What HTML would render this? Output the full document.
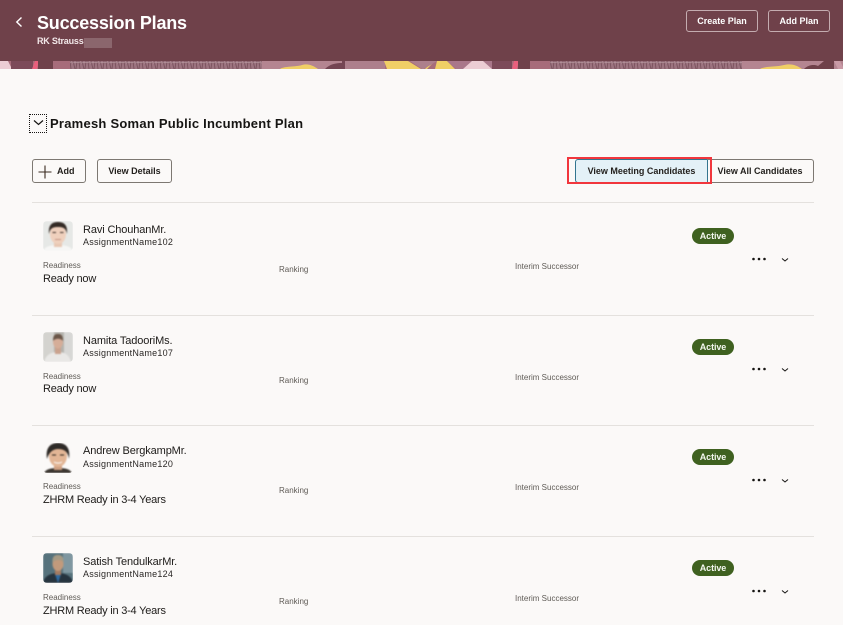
<!DOCTYPE html>
<html lang="en">
<head>
<meta charset="utf-8">
<title>Succession Plans</title>
<style>
html,body{margin:0;padding:0;}
body{width:843px;height:625px;overflow:hidden;position:relative;background:#fbf9f8;font-family:"Liberation Sans",sans-serif;color:#161513;}
.a{position:absolute;white-space:nowrap;}
.hdr{left:0;top:0;width:843px;height:61px;background:#6f414a;}
.band{left:0;top:61px;width:843px;height:8px;}
.title{left:37px;top:11px;font-size:18px;line-height:24px;font-weight:bold;color:#fff;letter-spacing:-.2px;}
.sub{left:37px;top:35px;font-size:9px;line-height:12px;font-weight:bold;color:#f3e9ea;letter-spacing:-.2px;}
.blur{left:84px;top:38px;width:28px;height:10px;background:#8b666d;}
.hb{top:10px;height:22px;border:1px solid #c4acb0;border-radius:3px;box-sizing:border-box;color:#fff;font-size:9px;font-weight:bold;text-align:center;line-height:20px;}
.h2{left:50px;top:115px;font-size:13px;line-height:17px;font-weight:bold;letter-spacing:.24px;}
.btn{top:159px;height:24px;box-sizing:border-box;border:1px solid #7d7872;border-radius:3px;font-size:9px;font-weight:bold;line-height:22px;text-align:center;color:#24211e;}
.sep{left:32px;width:782px;height:1px;background:#e4e1de;}
.av{left:43px;width:30px;height:30px;border-radius:4px;overflow:hidden;}
.av g{filter:blur(.7px);}
.nm{left:83px;font-size:11px;line-height:14px;color:#1d1b19;letter-spacing:-.12px;}
.as{left:83px;font-size:9px;line-height:12px;color:#2b2826;letter-spacing:.24px;}
.lb{font-size:8px;line-height:10px;color:#5f5b56;}
.val{left:43px;font-size:11px;line-height:14px;color:#1d1b19;letter-spacing:-.22px;}
.pill{left:692px;width:42px;height:16px;border-radius:8px;background:#3f6120;color:#f4f7ef;font-size:9px;font-weight:bold;line-height:16px;text-align:center;letter-spacing:-.1px;}
</style>
</head>
<body>
<div class="a hdr"></div>
<svg class="a band" width="843" height="8" viewBox="0 0 843 8" style="background:#a76c7a">
  <defs>
    <pattern id="t" width="9" height="8" patternUnits="userSpaceOnUse">
      <rect width="9" height="8" fill="#9d7480"/>
      <path d="M1 0L3 8M5 0L4 8M7 0L8 8" stroke="#7d5560" stroke-width="1"/>
      <path d="M0 2L9 1" stroke="#c4a9ae" stroke-width=".5"/>
    </pattern>
  </defs>
  <path d="M0 0H8L12 8H0Z" fill="#eccdd4"/>
  <rect x="11" width="22" height="8" fill="#7c4a59"/>
  <path d="M35 0H39L37 8H32Z" fill="#e9607d"/>
  <rect x="38" width="15" height="8" fill="#6f414a"/>
  <rect x="53" width="17" height="8" fill="#a76c7a"/>
  <rect x="70" width="192" height="8" fill="url(#t)"/>
  <rect x="262" width="83" height="8" fill="#b48591"/>
  <path d="M280 8C284 5 296 6 302 4C308 2 314 5 318 8Z" fill="#f0cf66"/>
  <path d="M325 8C330 3 336 2 342 2V0H345V8Z" fill="#744553"/>
  <rect x="345" width="40" height="8" fill="#ad7f8c"/>
  <path d="M384 0H408L421 8H387Z" fill="#f0cf66"/>
  <path d="M433 0H435L427 8H425Z" fill="#f0cf66"/>
  <path d="M437 0H447L455 8H435Z" fill="#f0cf66"/>
  <path d="M410 0H437L424 8H422Z" fill="#ad7f8c"/>
  <path d="M447 0H500V8H456Z" fill="#a9778a"/>
  <path d="M472 0H483L492 8H463Z" fill="#eccdd4"/>
  <rect x="492" width="20" height="8" fill="#7c4a59"/>
  <path d="M514 0H519L517 8H512Z" fill="#e9607d"/>
  <rect x="518" width="12" height="8" fill="#6f414a"/>
  <rect x="530" width="20" height="8" fill="#a76c7a"/>
  <rect x="550" width="192" height="8" fill="url(#t)"/>
  <rect x="742" width="101" height="8" fill="#b48591"/>
  <path d="M760 8C765 5 777 6 784 4C792 2 798 5 802 8Z" fill="#f0cf66"/>
  <path d="M804 8C808 4 814 3 818 5L824 0H834V8Z" fill="#6f414a"/>
  <path d="M834 0H840L843 6V8H838Z" fill="#c99aa6"/>
</svg>
<svg class="a" style="left:14px;top:15px" width="10" height="14" viewBox="0 0 10 14"><path d="M7.500 2.500L2.800 7l4.700 4.500" fill="none" stroke="#fff" stroke-width="1.400"/></svg>
<div class="a title">Succession Plans</div>
<div class="a sub">RK Strauss</div>
<div class="a blur"></div>
<div class="a hb" style="left:686px;width:72px">Create Plan</div>
<div class="a hb" style="left:768px;width:62px">Add Plan</div>

<div class="a" style="left:29px;top:114px;width:18px;height:19px;box-sizing:border-box;border:1px dotted #161513"></div>
<svg class="a" style="left:32px;top:119px" width="13" height="8" viewBox="0 0 13 8"><path d="M2 1.500L6.500 5.500l4.500-4" fill="none" stroke="#161513" stroke-width="1.200"/></svg>
<div class="a h2">Pramesh Soman Public Incumbent Plan</div>

<div class="a btn" style="left:32px;width:54px;text-align:left;padding-left:24px">Add</div>
<svg class="a" style="left:38px;top:165px" width="14" height="14" viewBox="0 0 14 14"><path d="M7 .5V13.500M.5 7H13.500" stroke="#3a2a20" stroke-width="1.100"/></svg>
<div class="a btn" style="left:97px;width:75px">View Details</div>
<div class="a btn" style="left:575px;width:133px;background:#e4f1f7;border-color:#33758f;border-radius:3px 0 0 3px;">View Meeting Candidates</div>
<div class="a btn" style="left:707px;width:107px;border-left:0;border-radius:0 3px 3px 0">View All Candidates</div>
<div class="a" style="left:567px;top:157px;width:145px;height:27px;box-sizing:border-box;border:2px solid #f1363d"></div>

<div class="a sep" style="top:202px"></div>
<div class="a sep" style="top:315px"></div>
<div class="a sep" style="top:425px"></div>
<div class="a sep" style="top:536px"></div>

<!-- Row 1 -->
<svg class="a av" style="top:221px" viewBox="0 0 30 30"><g><rect width="30" height="30" fill="#e6e8e6"/><path d="M0 30C2 25 9 24 15 24S28 25 30 30Z" fill="#f6f6f5"/><rect x="11" y="18" width="8" height="8" fill="#e7c7b3"/><ellipse cx="15" cy="13" rx="8" ry="10" fill="#efd0bd"/><path d="M6 13C5 3 10 1 15 1S25 3 24 13C23 7 20 6 15 6S7 7 6 13Z" fill="#332a25"/><path d="M9.500 11.500h3.500M17 11.500h3.500" stroke="#3d2f29" stroke-width="1"/><path d="M12 18.500h6" stroke="#b98574" stroke-width=".8"/></g></svg>
<div class="a nm" style="top:223px">Ravi ChouhanMr.</div>
<div class="a as" style="top:236px">AssignmentName102</div>
<div class="a lb" style="left:43px;top:261px">Readiness</div>
<div class="a val" style="top:272px">Ready now</div>
<div class="a lb" style="left:279px;top:265px">Ranking</div>
<div class="a lb" style="left:515px;top:262px">Interim Successor</div>
<div class="a pill" style="top:228px">Active</div>
<svg class="a" style="left:752px;top:256px" width="42" height="8" viewBox="0 0 42 8"><circle cx="1.500" cy="3" r="1.300" fill="#161513"/><circle cx="7" cy="3" r="1.300" fill="#161513"/><circle cx="12.500" cy="3" r="1.300" fill="#161513"/><path d="M30 2.500l3 2.500 3-2.500" fill="none" stroke="#161513" stroke-width="1"/></svg>

<!-- Row 2 -->
<svg class="a av" style="top:332px" viewBox="0 0 30 30"><g><rect width="30" height="30" fill="#b5b4ae"/><rect x="0" width="11" height="30" fill="#d4d3cf"/><rect x="21" width="9" height="30" fill="#d7d7d5"/><path d="M1 30C3 22 9 20 15 20S26 22 28 30Z" fill="#e9e8e6"/><rect x="12" y="14" width="6" height="8" fill="#caa28e"/><ellipse cx="15" cy="10" rx="5" ry="6.500" fill="#d5ad98"/><path d="M10 9C10 3 12 2 15 2S20 3 20 9C18 6 12 6 10 9Z" fill="#6b5648"/></g></svg>
<div class="a nm" style="top:334px">Namita TadooriMs.</div>
<div class="a as" style="top:347px">AssignmentName107</div>
<div class="a lb" style="left:43px;top:372px">Readiness</div>
<div class="a val" style="top:382px">Ready now</div>
<div class="a lb" style="left:279px;top:376px">Ranking</div>
<div class="a lb" style="left:515px;top:373px">Interim Successor</div>
<div class="a pill" style="top:339px">Active</div>
<svg class="a" style="left:752px;top:366px" width="42" height="8" viewBox="0 0 42 8"><circle cx="1.500" cy="3" r="1.300" fill="#161513"/><circle cx="7" cy="3" r="1.300" fill="#161513"/><circle cx="12.500" cy="3" r="1.300" fill="#161513"/><path d="M30 2.500l3 2.500 3-2.500" fill="none" stroke="#161513" stroke-width="1"/></svg>

<!-- Row 3 -->
<svg class="a av" style="top:443px" viewBox="0 0 30 30"><g><rect width="30" height="30" fill="#fbf9f8"/><path d="M1 30C3 26 8 25 15 25S27 26 29 30Z" fill="#3b3530"/><rect x="11" y="20" width="8" height="7" fill="#cfa082"/><ellipse cx="15" cy="13" rx="9" ry="11" fill="#e2b595"/><path d="M4 16C2 3 9 0 15 0S28 3 26 16C25 9 22 6 15 6C10 6 6 9 4 16Z" fill="#2e2a27"/><path d="M9 12h4M17 12h4" stroke="#2a211b" stroke-width="1.100"/><path d="M11 19c2 1.500 6 1.500 8 0" fill="none" stroke="#fff" stroke-width="1"/></g></svg>
<div class="a nm" style="top:444px">Andrew BergkampMr.</div>
<div class="a as" style="top:458px">AssignmentName120</div>
<div class="a lb" style="left:43px;top:482px">Readiness</div>
<div class="a val" style="top:493px">ZHRM Ready in 3-4 Years</div>
<div class="a lb" style="left:279px;top:486px">Ranking</div>
<div class="a lb" style="left:515px;top:483px">Interim Successor</div>
<div class="a pill" style="top:449px">Active</div>
<svg class="a" style="left:752px;top:477px" width="42" height="8" viewBox="0 0 42 8"><circle cx="1.500" cy="3" r="1.300" fill="#161513"/><circle cx="7" cy="3" r="1.300" fill="#161513"/><circle cx="12.500" cy="3" r="1.300" fill="#161513"/><path d="M30 2.500l3 2.500 3-2.500" fill="none" stroke="#161513" stroke-width="1"/></svg>

<!-- Row 4 -->
<svg class="a av" style="top:553px" viewBox="0 0 30 30"><g><rect width="30" height="30" fill="#56727c"/><rect x="20" width="10" height="20" fill="#7f97a0"/><path d="M0 30C1 23 8 20 15 20S29 23 30 30Z" fill="#26343f"/><path d="M12 21L15 30L18 21Z" fill="#2f6ba3"/><rect x="12" y="15" width="6" height="7" fill="#a57b61"/><ellipse cx="15" cy="11" rx="5.500" ry="7" fill="#c29a7c"/><path d="M9.500 10C9 3 12 2 15 2S21 3 20.500 10C19 6 12 6 9.500 10Z" fill="#a69a84"/></g></svg>
<div class="a nm" style="top:555px">Satish TendulkarMr.</div>
<div class="a as" style="top:568px">AssignmentName124</div>
<div class="a lb" style="left:43px;top:593px">Readiness</div>
<div class="a val" style="top:604px">ZHRM Ready in 3-4 Years</div>
<div class="a lb" style="left:279px;top:597px">Ranking</div>
<div class="a lb" style="left:515px;top:594px">Interim Successor</div>
<div class="a pill" style="top:560px">Active</div>
<svg class="a" style="left:752px;top:588px" width="42" height="8" viewBox="0 0 42 8"><circle cx="1.500" cy="3" r="1.300" fill="#161513"/><circle cx="7" cy="3" r="1.300" fill="#161513"/><circle cx="12.500" cy="3" r="1.300" fill="#161513"/><path d="M30 2.500l3 2.500 3-2.500" fill="none" stroke="#161513" stroke-width="1"/></svg>
</body>
</html>
